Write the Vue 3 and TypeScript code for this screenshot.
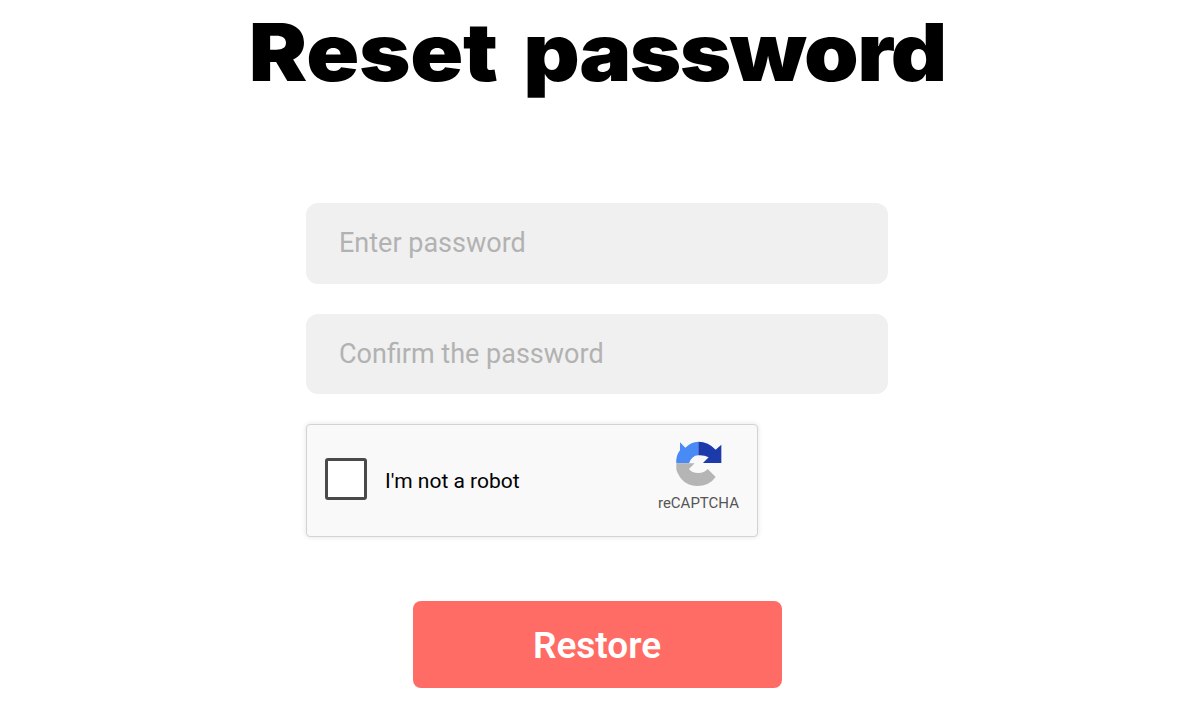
<script setup lang="ts">
const placeholders: string[] = ['Enter password', 'Confirm the password']
</script>

<template>
  <main class="page">
    <h1 class="title"><span class="first-word">Reset</span> <span class="second-word">password</span></h1>
    <form class="form" @submit.prevent>
      <input v-for="p in placeholders" :key="p" class="field" type="password" :placeholder="p" />
      <div class="captcha">
        <span class="check"></span>
        <span class="robot">I'm not a robot</span>
        <div class="brand">
          <svg class="logo" viewBox="100 55 150 150" width="50" height="50" aria-hidden="true">
            <path fill="#4a8af4" d="M121 68 L137 84 Q154 66 176 66 L176 107 Q156 108 148 131 L110 131 Q108 108 121 92 Z" />
            <path fill="#1c3aa9" d="M176 66 Q206 66 228 90 L245 75 L245 130 L190 130 L207 113 Q194 106 176 107 Z" />
            <path fill="#b5b5b5" d="M110 131 L165 131 L148 148 Q156 160 176 160 Q194 160 204 148 L228 172 Q208 200 170 199 Q126 196 110 150 Z" />
          </svg>
          <span class="brand-name">reCAPTCHA</span>
        </div>
      </div>
      <button class="submit" type="submit">Restore</button>
    </form>
  </main>
</template>

<style>
html, body { margin: 0; background: #fff; }
</style>

<style scoped>
.page {
  box-sizing: border-box;
  width: 1194px;
  height: 716px;
  overflow: hidden;
  display: flex;
  flex-direction: column;
  align-items: center;
  font-family: Roboto, "Liberation Sans", sans-serif;
}
.title {
  margin: 6px 0 0;
  height: 197px;
  line-height: 92px;
  font-family: Inter, "Open Sans", sans-serif;
  font-weight: 900;
  font-size: 80px;
  word-spacing: 7.5px;
  color: #000;
  white-space: nowrap;
  transform: scaleX(1.095);
}
.first-word {
  letter-spacing: -0.27px;
}
.second-word {
  letter-spacing: -1.46px;
}
.form {
  width: 582px;
  display: flex;
  flex-direction: column;
}
.field {
  box-sizing: border-box;
  width: 100%;
  height: 80.5px;
  margin-bottom: 30px;
  padding: 0 33px;
  border: 0;
  outline: 0;
  border-radius: 12px;
  background: #f0f0f0;
  font-family: inherit;
  font-size: 27px;
  color: #333;
}
.field::placeholder {
  color: #b2b2b2;
  opacity: 1;
}
.captcha {
  box-sizing: border-box;
  width: 452px;
  height: 113px;
  display: flex;
  align-items: center;
  padding: 0 18px;
  border: 1px solid #d3d3d3;
  border-radius: 4px;
  background: #f9f9f9;
  box-shadow: 0 0 4px 1px rgba(0, 0, 0, 0.08);
}
.check {
  box-sizing: border-box;
  width: 42px;
  height: 42px;
  flex: none;
  margin-bottom: 4px;
  border: 3px solid #4a4a4a;
  border-radius: 3px;
  background: #fff;
}
.robot {
  margin-left: 18px;
  font-size: 21px;
  color: #000;
  white-space: nowrap;
}
.brand {
  margin-left: auto;
  align-self: flex-start;
  display: flex;
  flex-direction: column;
  align-items: center;
}
.logo {
  display: block;
  margin-top: 13px;
}
.brand-name {
  margin-top: 5px;
  font-size: 15px;
  line-height: 20px;
  color: #555;
}
.submit {
  align-self: center;
  width: 369px;
  height: 87px;
  margin-top: 64px;
  padding: 2px 0 0;
  border: 0;
  border-radius: 8px;
  background: #ff6c65;
  color: #fff;
  font-family: inherit;
  font-weight: 600;
  font-size: 37px;
}
</style>
